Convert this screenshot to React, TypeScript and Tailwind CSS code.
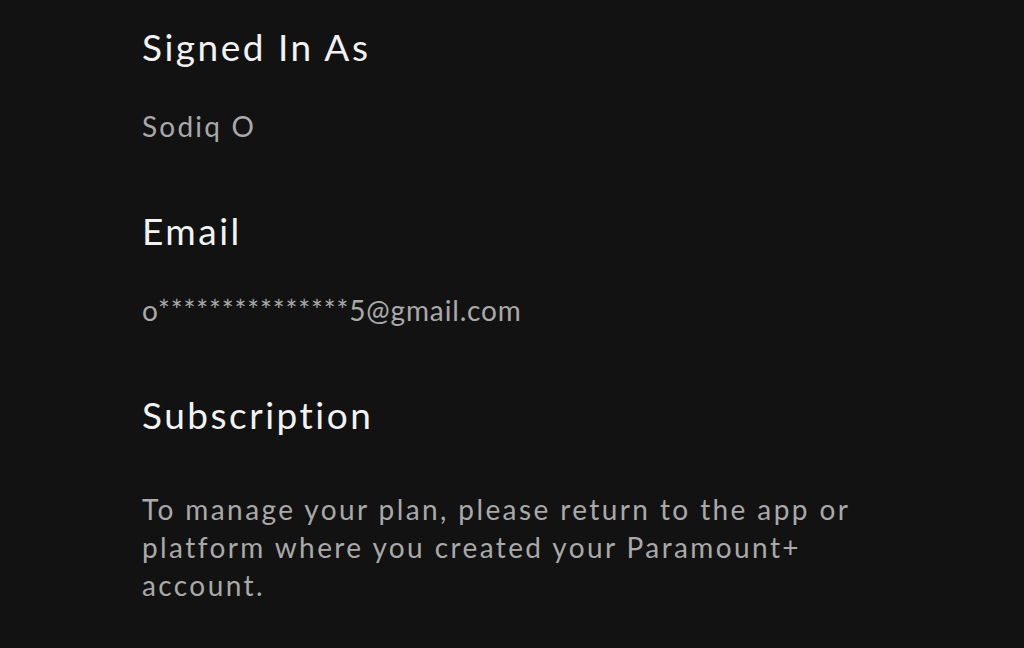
export default function App() {
  const sections = [
    { title: 'Signed In As', body: 'Sodiq O', extra: 'tracking-[2.2px]' },
    { title: 'Email', body: 'o***************5@gmail.com', extra: 'tracking-[0.85px]' },
    {
      title: 'Subscription',
      body: 'To manage your plan, please return to the app or platform where you created your Paramount+ account.',
      extra: 'tracking-[2.4px] mt-[15px]',
    },
  ];

  return (
    <div
      className="w-[1024px] h-[648px] overflow-hidden bg-[#121212] pl-[142px] pt-[22px]"
      style={{ fontFamily: 'Lato, "Open Sans", sans-serif' }}
    >
      <div className="w-[740px] flex flex-col gap-[61px]">
        {sections.map((s) => (
          <section key={s.title} className="flex flex-col gap-[35px]">
            <h2 className="text-[37px] leading-[50px] text-[#f2f2f2] font-normal tracking-[2.5px]">{s.title}</h2>
            <p className={`text-[28px] leading-[38px] text-[#a9a9a9] ${s.extra}`}>{s.body}</p>
          </section>
        ))}
      </div>
    </div>
  );
}
